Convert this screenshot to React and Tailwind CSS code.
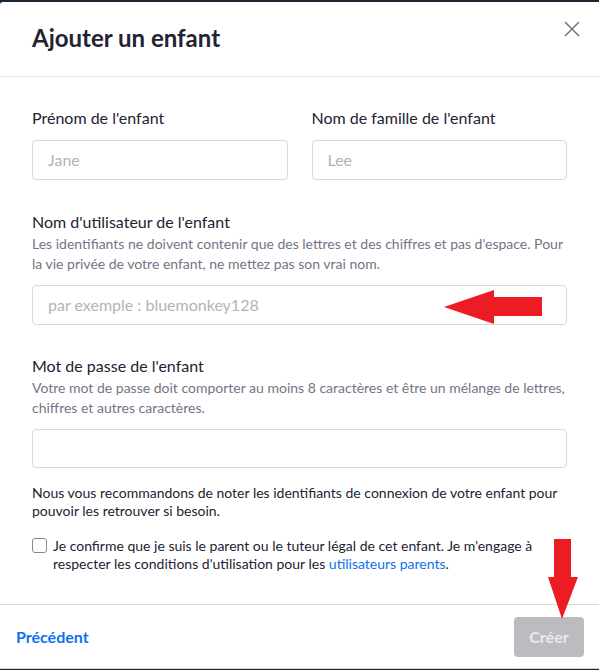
import React from "react";

export default function App() {
  return (
    <div className="w-[599px] h-[670px] bg-[#1b2634] pt-[2px] overflow-hidden" style={{ fontFamily: "Lato, 'Noto Sans', sans-serif" }}>
      <div className="relative w-full h-[667px] bg-white rounded-tl-[3px] flex flex-col border-b border-[#d0d0d0]">
        <div className="h-[75px] flex items-center justify-between pl-[32px] pr-[18px] border-b border-[#e6e6e6]">
          <h1 className="text-[24px] font-bold text-[#232333] leading-none mb-[3px]">Ajouter un enfant</h1>
          <svg width="18" height="18" viewBox="0 0 18 18" className="mb-[20px]">
            <path d="M2 2L16 16M16 2L2 16" stroke="#6e7680" strokeWidth="1.5" fill="none" />
          </svg>
        </div>
        <div className="flex-1 px-[32px] pt-[31px]">
          <div className="grid grid-cols-2 gap-[24px]">
            <div>
              <div className="text-[16px] text-[#232333] leading-[20px] mb-[12px]">Prénom de l'enfant</div>
              <div className="h-[40px] border border-[#d9d9d9] rounded-[4px] flex items-center px-[15px] text-[16px] text-[#b3b3b3]">Jane</div>
            </div>
            <div>
              <div className="text-[16px] text-[#232333] leading-[20px] mb-[12px]">Nom de famille de l'enfant</div>
              <div className="h-[40px] border border-[#d9d9d9] rounded-[4px] flex items-center px-[15px] text-[16px] text-[#b3b3b3]">Lee</div>
            </div>
          </div>
          <div className="mt-[32px]">
            <div className="text-[16px] text-[#232333] leading-[20px]">Nom d'utilisateur de l'enfant</div>
            <div className="text-[14px] text-[#747487] leading-[20px] mt-[2px]">Les identifiants ne doivent contenir que des lettres et des chiffres et pas d'espace. Pour la vie privée de votre enfant, ne mettez pas son vrai nom.</div>
            <div className="mt-[11px] h-[40px] border border-[#d9d9d9] rounded-[4px] flex items-center px-[15px] text-[16px] text-[#b3b3b3]">par exemple : bluemonkey128</div>
          </div>
          <div className="mt-[31px]">
            <div className="text-[16px] text-[#232333] leading-[20px]">Mot de passe de l'enfant</div>
            <div className="text-[14px] text-[#747487] leading-[20px] mt-[2px]">Votre mot de passe doit comporter au moins 8 caractères et être un mélange de lettres, chiffres et autres caractères.</div>
            <div className="mt-[11px] h-[39px] border border-[#d9d9d9] rounded-[4px]"></div>
          </div>
          <div className="mt-[16px] text-[14px] text-[#232333] leading-[18px]">Nous vous recommandons de noter les identifiants de connexion de votre enfant pour pouvoir les retrouver si besoin.</div>
          <div className="mt-[17px] flex items-start gap-[6px]">
            <div className="mt-[1px] w-[15px] h-[15px] shrink-0 border border-[#8a8a8a] rounded-[3px]"></div>
            <div className="text-[14px] text-[#232333] leading-[18px]">Je confirme que je suis le parent ou le tuteur légal de cet enfant. Je m'engage à respecter les conditions d'utilisation pour les <span className="text-[#0e72ed]">utilisateurs parents</span>.</div>
          </div>
        </div>
        <div className="h-[64px] border-t border-[#dcdcdc] flex items-center justify-between pl-[16px] pr-[15px]">
          <span className="text-[16px] font-bold text-[#0e72ed]">Précédent</span>
          <div className="h-[40px] w-[70px] rounded-[4px] bg-[#bbbcbf] flex items-center justify-center text-[16px] font-bold text-[#e9e9ea]">Créer</div>
        </div>
        <svg className="absolute left-[443px] top-[286px]" width="100" height="38" viewBox="0 0 100 38">
          <polygon points="1,19 51,2 51,9 99,9 99,28 51,28 51,36" fill="#ed1c24" />
        </svg>
        <svg className="absolute left-[547px] top-[535px]" width="32" height="83" viewBox="0 0 32 83">
          <polygon points="7,2 24,2 24,40 31,40 15,82 1,40 7,40" fill="#ed1c24" />
        </svg>
      </div>
    </div>
  );
}
